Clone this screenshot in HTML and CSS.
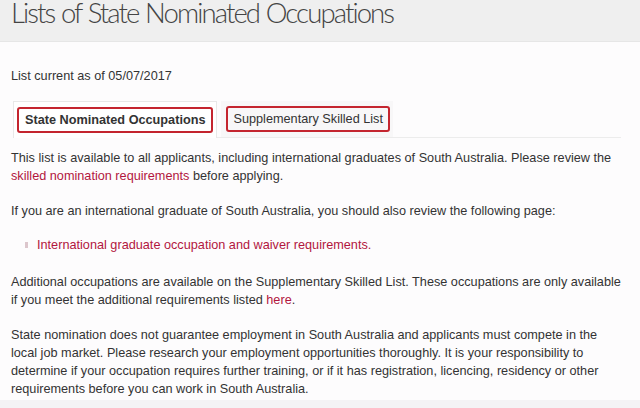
FILE: index.html
```html
<!DOCTYPE html>
<html>
<head>
<meta charset="utf-8">
<link rel="stylesheet" href="styles.css">
</head>
<body>
<header class="page-head">
  <h1 class="title">Lists of State Nominated Occupations</h1>
</header>
<main class="content">
  <p class="date">List current as of 05/07/2017</p>
  <ul class="tabs">
    <li class="tab active"><span class="tab-label">State Nominated Occupations</span></li>
    <li class="tab"><span class="tab-label">Supplementary Skilled List</span></li>
  </ul>
  <p class="para first">This list is available to all applicants, including international graduates of South Australia. Please review the <a class="link">skilled nomination requirements</a> before applying.</p>
  <p class="para">If you are an international graduate of South Australia, you should also review the following page:</p>
  <ul class="bullets">
    <li><a class="link">International graduate occupation and waiver requirements.</a></li>
  </ul>
  <p class="para">Additional occupations are available on the Supplementary Skilled List. These occupations are only available if you meet the additional requirements listed <a class="link">here</a>.</p>
  <p class="para">State nomination does not guarantee employment in South Australia and applicants must compete in the local job market. Please research your employment opportunities thoroughly. It is your responsibility to determine if your occupation requires further training, or if it has registration, licencing, residency or other requirements before you can work in South Australia.</p>
</main>
<div class="foot"></div>
</body>
</html>
```
FILE: styles.css
```css
html, body {
  margin: 0;
  padding: 0;
  background: #fdfcfd;
}
body {
  font-family: "Liberation Sans", Arial, sans-serif;
  font-size: 12.7px;
  color: #333;
  width: 640px;
  height: 408px;
  overflow: hidden;
  position: relative;
}
.page-head {
  background: #efefef;
  height: 42px;
  border-bottom: 1px solid #e6e6e6;
  box-sizing: border-box;
  padding-left: 11px;
  overflow: hidden;
}
.title {
  margin: 0;
  font-family: Lato, "Open Sans", sans-serif;
  font-weight: 300;
  font-size: 27.5px;
  line-height: 32px;
  margin-top: -3px;
  color: #444;
  letter-spacing: -1.9px;
  word-spacing: 1px;
}
.content {
  padding: 0 19px 0 11px;
}
.date {
  margin: 25px 0 0;
  line-height: 18px;
}
.tabs {
  list-style: none;
  margin: 16px 0 0 2px;
  padding: 0;
  display: flex;
  height: 36px;
  border-bottom: 1px solid #ececec;
}
.tab {
  padding: 5px 3px 0;
  box-sizing: border-box;
}
.tab.active {
  border: 1px solid #e8e8e8;
  border-bottom: none;
  background: #fff;
  margin-bottom: -1px;
}
.tab:not(.active) {
  margin-left: 4px;
  padding-left: 5px;
  background: #f8f7f8;
}
.tab-label {
  display: inline-block;
  border: 2px solid #c4252f;
  border-radius: 3px;
  padding: 3px 5px;
  line-height: 16px;
  color: #333;
}
.tab.active .tab-label {
  font-weight: bold;
  padding: 3px 6px;
}
.para {
  margin: 10px 0 0;
  line-height: 18px;
}
.para.first {
  margin-top: 11px;
}
.para + .para {
  margin-top: 17px;
}
.bullets {
  list-style: none;
  margin: 16px 0 0;
  padding: 0 0 0 14px;
  line-height: 18px;
}
.bullets li {
  position: relative;
  padding-left: 12px;
}
.bullets li::before {
  content: "";
  position: absolute;
  left: 0;
  top: 6px;
  width: 3px;
  height: 6px;
  background: #dcc6cc;
}
.bullets + .para {
  margin-top: 19px;
}
.link {
  color: #b2163e;
  text-decoration: none;
}
.foot {
  position: absolute;
  left: 0;
  right: 0;
  bottom: 0;
  height: 8px;
  background: #f4f3f5;
}
```
